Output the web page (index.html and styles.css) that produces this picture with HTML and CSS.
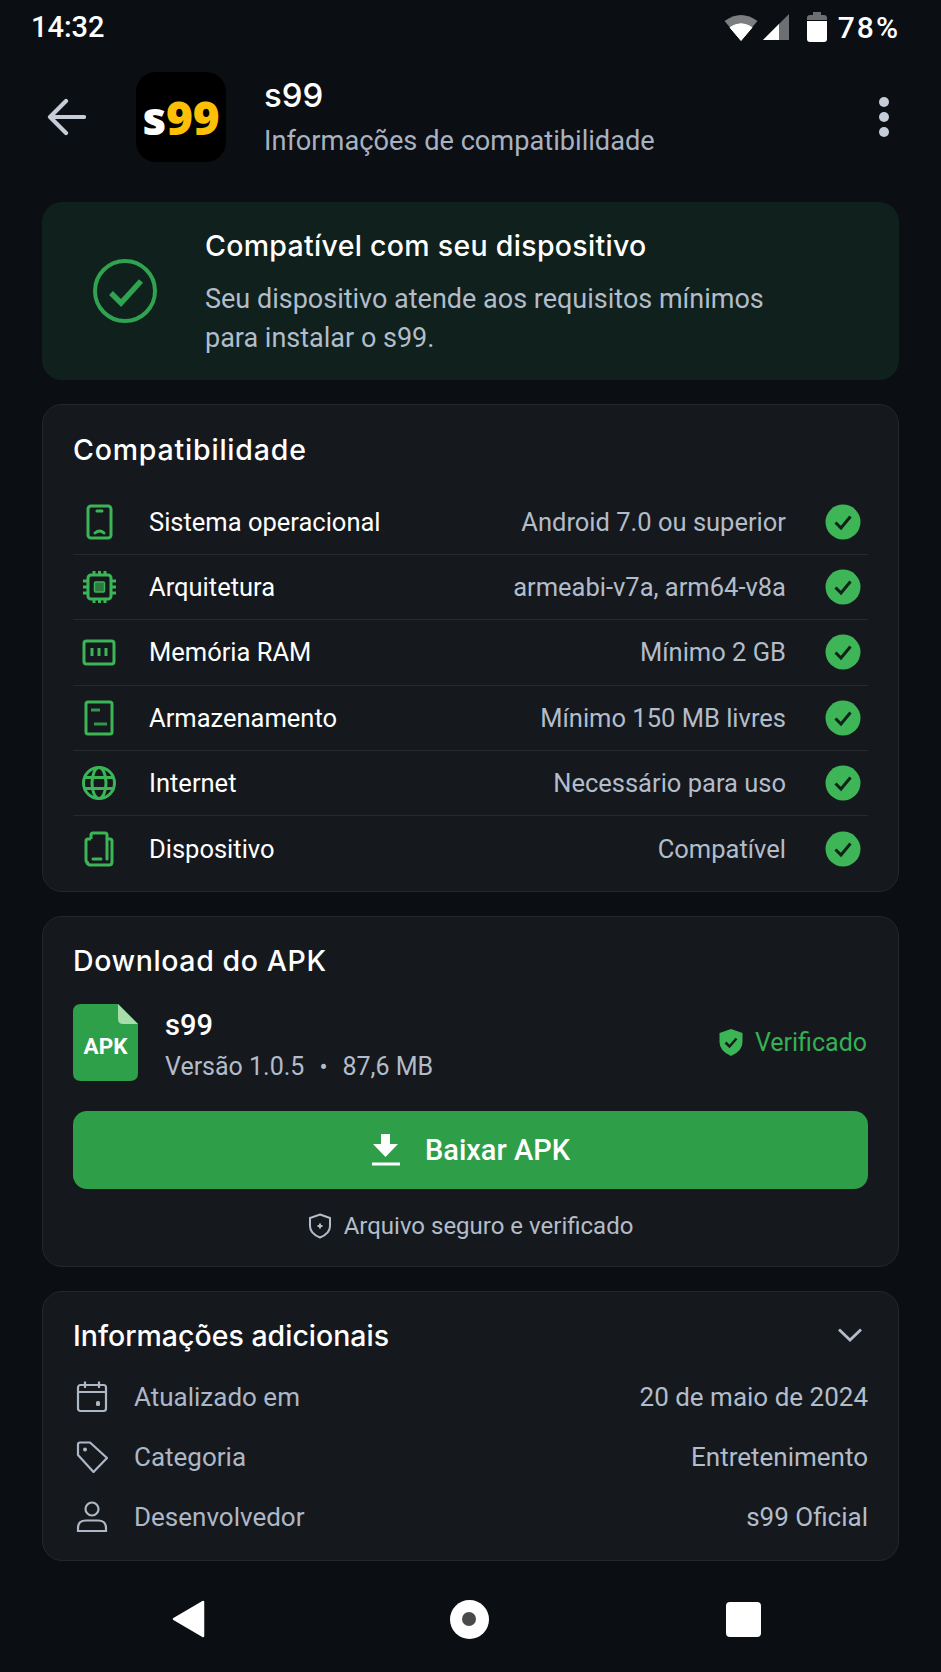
FILE: index.html
```html
<!DOCTYPE html>
<html lang="pt-BR">
<head>
    <meta charset="UTF-8">
    <meta name="viewport" content="width=device-width, initial-scale=1.0">
    <title>s99 - Informações de compatibilidade</title>
    <link rel="stylesheet" href="styles.css">
</head>
<body>

<div class="status-bar">
    <span class="status-time">14:32</span>
    <div class="status-icons">
        <svg class="ic-wifi" width="34" height="28" viewBox="0 0 34 28"><path d="M17 27.500 L0.500 8 Q17 -4 33.500 8 Z" fill="#7c7e81"/><path d="M17 27.500 L6 14.500 Q17 7 28 14.500 Z" fill="#fff" stroke="#fff" stroke-linejoin="round"/></svg>
        <svg class="ic-signal" width="28" height="28" viewBox="0 0 28 28"><path d="M27 1 V27 H1 Z" fill="#6d7073"/><path d="M17 11 V27 H1 Z" fill="#fff"/></svg>
        <svg class="ic-battery" width="20" height="30" viewBox="0 0 20 30"><path d="M6 0 H14 V3 H17 Q20 3 20 6 V8 H0 V6 Q0 3 3 3 H6 Z" fill="#6d7073"/><path d="M0 9 H20 V27 Q20 30 17 30 H3 Q0 30 0 27 Z" fill="#fff"/></svg>
        <span class="status-batt">78%</span>
    </div>
</div>

<header class="topbar">
    <svg class="back" width="40" height="38" viewBox="0 0 40 38" fill="none" stroke="#c5cdd9" stroke-width="4.200" stroke-linecap="round" stroke-linejoin="round"><path d="M38 19 H4 M20 3 L4 19 L20 35"/></svg>
    <div class="app-logo"><span class="s">s</span><span class="nn">99</span></div>
    <div class="app-title">
        <div class="app-name">s99</div>
        <div class="app-sub">Informações de compatibilidade</div>
    </div>
    <div class="kebab"><i></i><i></i><i></i></div>
</header>

<main class="content">

    <section class="card-ok">
        <svg class="ok-icon" width="66" height="66" viewBox="0 0 66 66" fill="none" stroke="#2fa350"><circle cx="33" cy="33" r="30" stroke-width="4"/><path d="M19 35 L29 45 L49 23" stroke-width="5.500"/></svg>
        <div>
            <h1 class="ok-title">Compatível com seu dispositivo</h1>
            <p class="ok-desc">Seu dispositivo atende aos requisitos mínimos<br>para instalar o s99.</p>
        </div>
    </section>

    <section class="card card-compat">
        <h2>Compatibilidade</h2>
        <div class="row">
            <svg class="row-ic" width="36" height="36" viewBox="0 0 36 36" fill="none" stroke="#3bb556" stroke-width="3"><rect x="7" y="2" width="23" height="32" rx="3"/><path d="M16 7 H21 M14 29 Q18.500 25 23 29" stroke-linecap="round"/></svg>
            <span class="row-label">Sistema operacional</span>
            <span class="row-value">Android 7.0 ou superior</span>
            <svg class="check" width="36" height="36" viewBox="0 0 36 36"><circle cx="18" cy="18" r="17.500" fill="#3eb556"/><path d="M10.500 18.500 L16 24 L25.500 12.500" fill="none" stroke="#10231a" stroke-width="3"/></svg>
        </div>
        <div class="row">
            <svg class="row-ic" width="36" height="36" viewBox="0 0 36 36" fill="none" stroke="#3bb556" stroke-width="3"><rect x="7" y="6" width="23" height="24" rx="3"/><rect x="13.500" y="13" width="10" height="10" rx="1" fill="#2c7a42" stroke-width="1.500"/><path d="M13 2 V6 M18.500 2 V6 M24 2 V6 M13 30 V34 M18.500 30 V34 M24 30 V34 M2 12 H7 M2 18 H7 M2 24 H7 M30 12 H35 M30 18 H35 M30 24 H35"/></svg>
            <span class="row-label">Arquitetura</span>
            <span class="row-value">armeabi-v7a, arm64-v8a</span>
            <svg class="check" width="36" height="36" viewBox="0 0 36 36"><circle cx="18" cy="18" r="17.500" fill="#3eb556"/><path d="M10.500 18.500 L16 24 L25.500 12.500" fill="none" stroke="#10231a" stroke-width="3"/></svg>
        </div>
        <div class="row">
            <svg class="row-ic" width="36" height="36" viewBox="0 0 36 36" fill="none" stroke="#3bb556" stroke-width="3"><rect x="3" y="7" width="30" height="23" rx="2.500"/><path d="M11 14 V22 M18 14 V22 M25 14 V22" stroke-width="3"/></svg>
            <span class="row-label">Memória RAM</span>
            <span class="row-value">Mínimo 2 GB</span>
            <svg class="check" width="36" height="36" viewBox="0 0 36 36"><circle cx="18" cy="18" r="17.500" fill="#3eb556"/><path d="M10.500 18.500 L16 24 L25.500 12.500" fill="none" stroke="#10231a" stroke-width="3"/></svg>
        </div>
        <div class="row">
            <svg class="row-ic" width="36" height="36" viewBox="0 0 36 36" fill="none" stroke="#3bb556" stroke-width="3"><path d="M7 2 H29 Q31 2 31 4 V32 Q31 34 29 34 H7 Q5 34 5 32 V4 Q5 2 7 2 Z"/><path d="M10 10 H19 M13 24 H26" stroke-width="3" stroke-opacity=".8"/></svg>
            <span class="row-label">Armazenamento</span>
            <span class="row-value">Mínimo 150 MB livres</span>
            <svg class="check" width="36" height="36" viewBox="0 0 36 36"><circle cx="18" cy="18" r="17.500" fill="#3eb556"/><path d="M10.500 18.500 L16 24 L25.500 12.500" fill="none" stroke="#10231a" stroke-width="3"/></svg>
        </div>
        <div class="row">
            <svg class="row-ic" width="36" height="36" viewBox="0 0 36 36" fill="none" stroke="#3bb556" stroke-width="3"><circle cx="18" cy="18" r="15.500"/><ellipse cx="18" cy="18" rx="7" ry="15.500"/><path d="M4 12.500 H32 M4 23.500 H32"/></svg>
            <span class="row-label">Internet</span>
            <span class="row-value">Necessário para uso</span>
            <svg class="check" width="36" height="36" viewBox="0 0 36 36"><circle cx="18" cy="18" r="17.500" fill="#3eb556"/><path d="M10.500 18.500 L16 24 L25.500 12.500" fill="none" stroke="#10231a" stroke-width="3"/></svg>
        </div>
        <div class="row">
            <svg class="row-ic" width="36" height="36" viewBox="0 0 36 36" fill="none" stroke="#3bb556" stroke-width="3"><path d="M10 8 V4 Q10 2 12 2 H24 Q26 2 26 4 V8"/><path d="M26 8 H29 Q31 8 31 10 V31 Q31 34 28 34 H10 Q7 34 6 32"/><path d="M10 8 H7 Q5 8 5 10 V29 Q5 32 8 32"/><path d="M26 8 V28 M12 28 H20" stroke-linecap="round"/></svg>
            <span class="row-label">Dispositivo</span>
            <span class="row-value">Compatível</span>
            <svg class="check" width="36" height="36" viewBox="0 0 36 36"><circle cx="18" cy="18" r="17.500" fill="#3eb556"/><path d="M10.500 18.500 L16 24 L25.500 12.500" fill="none" stroke="#10231a" stroke-width="3"/></svg>
        </div>
    </section>

    <section class="card card-download">
        <h2>Download do APK</h2>
        <div class="apk-line">
            <svg class="apk-file" width="65" height="77" viewBox="0 0 65 77">
                <path d="M8 0 H45 L65 20 V69 Q65 77 57 77 H8 Q0 77 0 69 V8 Q0 0 8 0 Z" fill="#2fa04a"/>
                <path d="M45 0 L65 20 H50 Q45 20 45 15 Z" fill="#a7dcab"/>
                <text x="32.500" y="50" text-anchor="middle">APK</text>
            </svg>
            <div class="apk-info">
                <div class="apk-name">s99</div>
                <div class="apk-meta">Versão 1.0.5<span class="dot">•</span>87,6 MB</div>
            </div>
            <div class="verified">
                <svg width="24" height="27" viewBox="0 0 24 27"><path d="M12 0 L23.500 4 V13 Q23.500 22 12 27 Q0.500 22 0.500 13 V4 Z" fill="#3bb556"/><path d="M6.500 13.500 L10.500 17.500 L17.500 9.500" fill="none" stroke="#12201a" stroke-width="2.500"/></svg>
                <span>Verificado</span>
            </div>
        </div>
        <div class="btn-download">
            <svg width="30" height="32" viewBox="0 0 30 32" fill="#fff"><path d="M10 0 H19 V10 H27 L14.500 23 L2 10 H10 Z"/><rect x="1" y="28.500" width="28" height="3"/></svg>
            <span>Baixar APK</span>
        </div>
        <div class="safe-note">
            <svg width="24" height="26" viewBox="0 0 24 26" fill="none" stroke="#b3bcc9" stroke-width="2"><path d="M12 1.500 L22 5 V13 Q22 20.500 12 24.500 Q2 20.500 2 13 V5 Z"/><path d="M12 10.500 V15.500 M9.500 13 H14.500"/></svg>
            <span>Arquivo seguro e verificado</span>
        </div>
    </section>

    <section class="card card-extra">
        <div class="extra-head">
            <h2>Informações adicionais</h2>
            <svg width="26" height="16" viewBox="0 0 26 16" fill="none" stroke="#b3bcc9" stroke-width="2.800"><path d="M2 2.500 L13 13 L24 2.500"/></svg>
        </div>
        <div class="extra-row">
            <svg width="32" height="32" viewBox="0 0 32 32" fill="none" stroke="#aeb7c5" stroke-width="2.200"><rect x="2" y="4" width="28" height="26" rx="2.500"/><path d="M2 11 H30 M9 0.500 V7 M23 0.500 V7"/><rect x="20" y="20" width="4" height="5" rx="1.500" fill="#aeb7c5" stroke="none"/></svg>
            <span class="extra-label">Atualizado em</span>
            <span class="extra-value">20 de maio de 2024</span>
        </div>
        <div class="extra-row">
            <svg width="32" height="32" viewBox="0 0 32 32" fill="none" stroke="#aeb7c5" stroke-width="2.200"><path d="M2 3.500 Q2 1.500 4 1.500 H14 L31 17 L17.500 31 L2 14 Z" stroke-linejoin="round"/><circle cx="9" cy="8.500" r="2" fill="#aeb7c5" stroke="none"/></svg>
            <span class="extra-label">Categoria</span>
            <span class="extra-value">Entretenimento</span>
        </div>
        <div class="extra-row">
            <svg width="32" height="32" viewBox="0 0 32 32" fill="none" stroke="#aeb7c5" stroke-width="2.200"><circle cx="16" cy="8" r="6.500"/><path d="M2 30 V27 Q2 19.500 10 19.500 H22 Q30 19.500 30 27 V30 Z"/></svg>
            <span class="extra-label">Desenvolvedor</span>
            <span class="extra-value">s99 Oficial</span>
        </div>
    </section>

</main>

<nav class="navbar">
    <svg width="34" height="38" viewBox="0 0 34 38"><path d="M31 2 V36 L2 19 Z" fill="#fff" stroke="#fff" stroke-width="2.500" stroke-linejoin="round"/></svg>
    <div class="nav-home"><i></i></div>
    <div class="nav-recent"></div>
</nav>

</body>
</html>
```

FILE: styles.css
```css
* {
    box-sizing: border-box;
}
body {
    width: 941px;
    height: 1672px;
    margin: 0;
    overflow: hidden;
    background-color: #0b0e12;
    color: #fff;
    font-family: Roboto, "Noto Sans", sans-serif;
}
h1, h2, p {
    margin: 0;
}

/* Barra de status */
.status-bar {
    display: flex;
    justify-content: space-between;
    align-items: center;
    height: 54px;
    padding: 0 41px 0 31px;
    font-size: 29px;
    font-weight: 500;
}
.status-icons {
    display: flex;
    align-items: center;
}
.ic-signal {
    margin-left: 4px;
}
.ic-battery {
    margin-left: 17px;
}
.status-batt {
    margin-left: 11px;
    font-size: 30px;
    letter-spacing: 2px;
}

/* Topo */
.topbar {
    display: flex;
    align-items: center;
    height: 90px;
    margin-top: 18px;
    padding-left: 46px;
}
.back {
    flex: none;
}
.app-logo {
    display: flex;
    justify-content: center;
    align-items: center;
    flex: none;
    width: 90px;
    height: 90px;
    margin-left: 50px;
    border-radius: 20px;
    background-color: #000;
    font-family: "Open Sans", sans-serif;
    font-size: 46px;
    font-weight: 800;
    letter-spacing: -0.200px;
}
.app-logo .nn {
    color: #fdc007;
}
.app-title {
    margin-left: 38px;
}
.app-name {
    font-family: Inter, Roboto, sans-serif;
    font-size: 33px;
    font-weight: 500;
    line-height: 46px;
}
.app-sub {
    margin-top: 1px;
    font-size: 27.200px;
    line-height: 44px;
    color: #a9b2c0;
}
.kebab {
    display: flex;
    flex-direction: column;
    gap: 5px;
    margin-left: auto;
    margin-right: 52px;
}
.kebab i {
    width: 10px;
    height: 10px;
    border-radius: 50%;
    background-color: #c5cdd9;
}

/* Cartoes */
.content {
    display: flex;
    flex-direction: column;
    gap: 24px;
    margin-top: 40px;
    padding: 0 42px;
}
.card-ok {
    display: flex;
    align-items: center;
    height: 178px;
    padding-left: 50px;
    border-radius: 20px;
    background-color: #0f201d;
}
.ok-icon {
    flex: none;
    margin-right: 47px;
}
.ok-title {
    margin-top: 2px;
    font-family: Inter, Roboto, sans-serif;
    font-size: 28.500px;
    font-weight: 500;
    letter-spacing: 0.300px;
    line-height: 40px;
}
.ok-desc {
    margin-top: 14px;
    font-size: 27px;
    line-height: 39px;
    color: #b3bcc9;
}
.card {
    padding: 0 30px;
    border: 1px solid #24282d;
    border-radius: 20px;
    background-color: #15191e;
}
.card h2 {
    font-family: Inter, Roboto, sans-serif;
    font-size: 28.500px;
    font-weight: 500;
}

/* Compatibilidade */
.card-compat {
    height: 488px;
}
.card-compat h2 {
    padding-top: 23px;
    line-height: 44px;
    margin-bottom: 18px;
    letter-spacing: 0.800px;
}
.row {
    display: flex;
    align-items: center;
    height: 65.200px;
    border-bottom: 1px solid #262a2f;
}
.row:last-child {
    border-bottom: none;
}
.row-ic {
    flex: none;
    margin-left: 8px;
}
.row-label {
    margin-left: 32px;
    font-size: 25.500px;
}
.row-value {
    margin-left: auto;
    font-size: 25.500px;
    color: #b3bcc9;
}
.check {
    flex: none;
    margin-left: 39px;
    margin-right: 7px;
}

/* Download */
.card-download {
    height: 351px;
}
.card-download h2 {
    padding-top: 22px;
    line-height: 44px;
    letter-spacing: 0.600px;
}
.apk-line {
    display: flex;
    align-items: center;
    margin-top: 16px;
}
.apk-file {
    flex: none;
}
.apk-file text {
    fill: #fff;
    font-size: 22.500px;
    font-weight: 700;
}
.apk-info {
    margin-top: 6px;
    margin-left: 27px;
}
.apk-name {
    font-size: 29px;
    font-weight: 500;
    line-height: 40px;
}
.apk-meta {
    margin-top: 3px;
    font-size: 25px;
    line-height: 38px;
    color: #b3bcc9;
}
.dot {
    margin: 0 15px;
    color: #b3bcc9;
    font-size: 24px;
}
.verified {
    display: flex;
    align-items: center;
    gap: 12px;
    margin-left: auto;
    margin-right: 1px;
    font-size: 25px;
    color: #36b052;
}
.btn-download {
    display: flex;
    justify-content: center;
    align-items: center;
    gap: 24px;
    height: 78px;
    margin-top: 25px;
    border-radius: 14px;
    background-color: #2e9e48;
    font-size: 29px;
    font-weight: 500;
}
.safe-note {
    display: flex;
    justify-content: center;
    align-items: center;
    gap: 12px;
    margin-top: 23px;
    font-size: 24px;
    color: #b3bcc9;
}

/* Informacoes adicionais */
.card-extra {
    height: 270px;
}
.extra-head {
    display: flex;
    justify-content: space-between;
    align-items: center;
    height: 44px;
    margin-top: 21px;
    margin-bottom: 9.500px;
}
.extra-head svg {
    margin-right: 5px;
}
.extra-row {
    display: flex;
    align-items: center;
    height: 60px;
    padding-left: 3px;
}
.extra-label {
    margin-left: 26px;
    font-size: 26px;
    color: #aeb7c5;
}
.extra-value {
    margin-left: auto;
    font-size: 26px;
    color: #b3bcc9;
}

/* Barra de navegacao */
.navbar {
    display: flex;
    align-items: center;
    justify-content: space-between;
    height: 40px;
    margin-top: 38px;
    padding: 0 180px 0 172px;
}
.nav-home {
    display: flex;
    justify-content: center;
    align-items: center;
    width: 39px;
    height: 39px;
    margin-left: 6px;
    border-radius: 50%;
    background-color: #fff;
}
.nav-home i {
    width: 14px;
    height: 14px;
    border-radius: 50%;
    background-color: #4a4a4a;
}
.nav-recent {
    width: 35px;
    height: 35px;
    border-radius: 4px;
    background-color: #fff;
}
```
